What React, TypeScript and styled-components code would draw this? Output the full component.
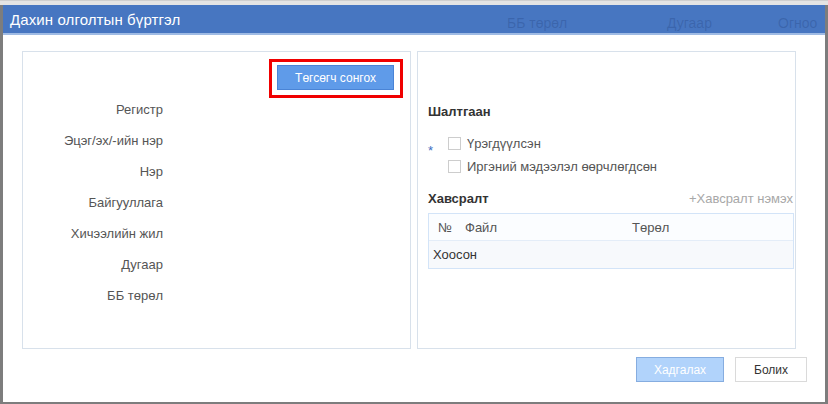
import React from 'react';
import styled, { createGlobalStyle } from 'styled-components';

const GlobalStyle = createGlobalStyle`
    html, body {
        margin: 0;
        padding: 0;
        background: #dedede;
        font-family: 'Liberation Sans', Arial, sans-serif;
    }
`;

const Backdrop = styled.div`
    width: 828px;
    height: 404px;
    padding-top: 4px;
    box-sizing: border-box;
    background: #e4e4e4;
    border-top: 1px solid #cfcfcf;
`;

const Dialog = styled.div`
    height: 400px;
    box-sizing: border-box;
    display: flex;
    flex-direction: column;
    background: #fff;
    border-left: 3px solid #7d7d7d;
    border-right: 3px solid #7d7d7d;
    border-bottom: 3px solid #7d7d7d;
`;

const Header = styled.div`
    position: relative;
    height: 28px;
    display: flex;
    align-items: center;
    padding-left: 7px;
    background: #4776c1;
    border-bottom: 2px solid #9fbbe4;
    overflow: hidden;
`;

const Title = styled.span`
    position: relative;
    z-index: 1;
    color: #fff;
    font-size: 15px;
    letter-spacing: 0.1px;
`;

const Ghost = styled.span<{ $left: number }>`
    position: absolute;
    left: ${p => p.$left}px;
    top: 10px;
    font-size: 14px;
    color: rgba(30, 60, 120, 0.28);
`;

const Body = styled.div`
    flex: 1;
    display: flex;
    flex-direction: column;
    padding: 16px 18px 0 19px;
`;

const Panels = styled.div`
    display: flex;
    gap: 6px;
    height: 298px;
`;

const Panel = styled.div<{ $width: number }>`
    width: ${p => p.$width}px;
    box-sizing: border-box;
    border: 1px solid #d8e1eb;
    display: flex;
    flex-direction: column;
`;

const PickerRow = styled.div`
    display: flex;
    justify-content: flex-end;
    padding: 7px 7px 0 0;
`;

const Highlight = styled.div`
    border: 3px solid #f00000;
    padding: 3px 6px 5px 5px;
`;

const PrimaryButton = styled.button<{ $disabled?: boolean }>`
    height: 25px;
    box-sizing: border-box;
    padding: 0;
    font-family: inherit;
    font-size: 12px;
    color: #fff;
    background: ${p => (p.$disabled ? '#b1d3fb' : '#5f9be9')};
    border: 1px solid ${p => (p.$disabled ? '#86ade0' : '#4a84d6')};
    cursor: pointer;
`;

const DefaultButton = styled.button`
    height: 25px;
    box-sizing: border-box;
    padding: 0;
    font-family: inherit;
    font-size: 12px;
    color: #333;
    background: #fff;
    border: 1px solid #dadada;
    cursor: pointer;
`;

const FieldList = styled.div`
    margin-top: -4px;
    display: flex;
    flex-direction: column;
`;

const FieldRow = styled.div`
    height: 31px;
    display: flex;
    align-items: center;
`;

const FieldLabel = styled.span`
    width: 140px;
    text-align: right;
    font-size: 13px;
    color: #555;
`;

const RightContent = styled.div`
    padding: 52px 1px 0 10px;
    display: flex;
    flex-direction: column;
`;

const SectionTitle = styled.div`
    font-size: 13px;
    font-weight: bold;
    color: #333;
`;

const ReasonBlock = styled.div`
    position: relative;
    margin-top: 16px;
    padding-left: 20px;
    display: flex;
    flex-direction: column;
    gap: 7px;
`;

const Required = styled.span`
    position: absolute;
    left: 0;
    top: 8px;
    font-size: 13px;
    color: #3b6fc2;
`;

const CheckRow = styled.label`
    display: flex;
    align-items: center;
    gap: 6px;
    height: 16px;
    font-size: 13px;
    color: #555;
`;

const Box = styled.span`
    width: 13px;
    height: 13px;
    box-sizing: border-box;
    border: 1px solid #cdcdcd;
    background: #fff;
`;

const AttachHead = styled.div`
    margin-top: 17px;
    display: flex;
    justify-content: space-between;
    align-items: center;
    padding-right: 1px;
`;

const AddLink = styled.span`
    font-size: 13px;
    color: #a8a8a8;
    cursor: pointer;
`;

const Table = styled.div`
    margin-top: 7px;
    border: 1px solid #d3e4f8;
`;

const HeadRow = styled.div`
    height: 26px;
    display: flex;
    align-items: center;
    background: #fbfdff;
    border-bottom: 1px solid #e4edf8;
    font-size: 13px;
    color: #555;
`;

const Cell = styled.span<{ $width?: number; $pad?: number }>`
    box-sizing: border-box;
    width: ${p => (p.$width ? `${p.$width}px` : 'auto')};
    padding-left: ${p => p.$pad ?? 0}px;
`;

const EmptyRow = styled.div`
    height: 27px;
    display: flex;
    align-items: center;
    padding-left: 4px;
    background: #f7f9fc;
    font-size: 13px;
    color: #333;
`;

const Footer = styled.div`
    display: flex;
    justify-content: flex-end;
    gap: 11px;
    margin-top: 8px;
`;

const fields = ['Регистр', 'Эцэг/эх/-ийн нэр', 'Нэр', 'Байгууллага', 'Хичээлийн жил', 'Дугаар', 'ББ төрөл'];

const App = () => (
    <>
        <GlobalStyle />
        <Backdrop>
            <Dialog>
                <Header>
                    <Ghost $left={504}>ББ төрөл</Ghost>
                    <Ghost $left={664}>Дугаар</Ghost>
                    <Ghost $left={775}>Огноо</Ghost>
                    <Title>Дахин олголтын бүртгэл</Title>
                </Header>
                <Body>
                    <Panels>
                        <Panel $width={389}>
                            <PickerRow>
                                <Highlight>
                                    <PrimaryButton style={{ width: 117 }}>Төгсөгч сонгох</PrimaryButton>
                                </Highlight>
                            </PickerRow>
                            <FieldList>
                                {fields.map(f => (
                                    <FieldRow key={f}>
                                        <FieldLabel>{f}</FieldLabel>
                                    </FieldRow>
                                ))}
                            </FieldList>
                        </Panel>
                        <Panel $width={379}>
                            <RightContent>
                                <SectionTitle>Шалтгаан</SectionTitle>
                                <ReasonBlock>
                                    <Required>*</Required>
                                    <CheckRow>
                                        <Box />
                                        Үрэгдүүлсэн
                                    </CheckRow>
                                    <CheckRow>
                                        <Box />
                                        Иргэний мэдээлэл өөрчлөгдсөн
                                    </CheckRow>
                                </ReasonBlock>
                                <AttachHead>
                                    <SectionTitle>Хавсралт</SectionTitle>
                                    <AddLink>+Хавсралт нэмэх</AddLink>
                                </AttachHead>
                                <Table>
                                    <HeadRow>
                                        <Cell $width={36} $pad={9}>№</Cell>
                                        <Cell $width={167}>Файл</Cell>
                                        <Cell>Төрөл</Cell>
                                    </HeadRow>
                                    <EmptyRow>Хоосон</EmptyRow>
                                </Table>
                            </RightContent>
                        </Panel>
                    </Panels>
                    <Footer>
                        <PrimaryButton $disabled style={{ width: 88 }}>Хадгалах</PrimaryButton>
                        <DefaultButton style={{ width: 72 }}>Болих</DefaultButton>
                    </Footer>
                </Body>
            </Dialog>
        </Backdrop>
    </>
);

export default App;
